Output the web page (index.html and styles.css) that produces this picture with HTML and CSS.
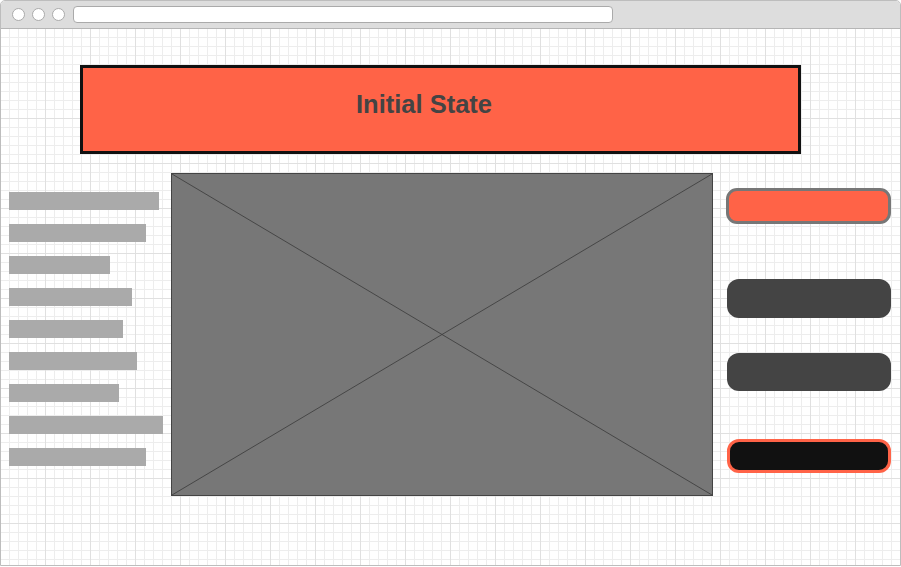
FILE: index.html
```html
<!DOCTYPE html>
<html lang="en">
<head>
<meta charset="utf-8">
<title>Initial State</title>
<link rel="stylesheet" href="styles.css">
</head>
<body>
<div class="window">
  <div class="chrome">
    <span class="dot"></span><span class="dot"></span><span class="dot"></span>
    <div class="address"></div>
  </div>
  <div class="canvas">
    <div class="header"><span class="title">Initial State</span></div>
    <div class="row">
      <div class="nav">
        <div class="bar" style="width:150px"></div>
        <div class="bar" style="width:137px"></div>
        <div class="bar" style="width:101px"></div>
        <div class="bar" style="width:123px"></div>
        <div class="bar" style="width:114px"></div>
        <div class="bar" style="width:128px"></div>
        <div class="bar" style="width:110px"></div>
        <div class="bar" style="width:154px"></div>
        <div class="bar" style="width:137px"></div>
      </div>
      <div class="image">
        <svg class="cross" viewBox="0 0 540 321" preserveAspectRatio="none" width="540" height="321">
          <line x1="0" y1="0" x2="540" y2="321" />
          <line x1="540" y1="0" x2="0" y2="321" />
        </svg>
      </div>
      <div class="actions">
        <div class="btn btn-primary"></div>
        <div class="btn btn-dark btn-2"></div>
        <div class="btn btn-dark btn-3"></div>
        <div class="btn btn-black"></div>
      </div>
    </div>
  </div>
</div>
</body>
</html>
```
FILE: styles.css
```css
html, body {
  margin: 0;
  padding: 0;
  background: #ffffff;
}

.window {
  width: 901px;
  height: 566px;
  box-sizing: border-box;
  border: 1px solid #bdbdbd;
  border-radius: 5px 5px 0 0;
  overflow: hidden;
  display: flex;
  flex-direction: column;
}

.chrome {
  height: 27px;
  flex: none;
  background: #dddddd;
  border-bottom: 1px solid #b5b5b5;
  display: flex;
  align-items: center;
  padding-left: 11px;
  gap: 7px;
}

.dot {
  width: 13px;
  height: 13px;
  box-sizing: border-box;
  border-radius: 50%;
  background: #ffffff;
  border: 1px solid #aaaaaa;
  flex: none;
}

.address {
  margin-left: 1px;
  width: 540px;
  height: 17px;
  box-sizing: border-box;
  background: #ffffff;
  border: 1px solid #aaaaaa;
  border-radius: 4px;
}

.canvas {
  flex: 1;
  background-color: #ffffff;
  background-image:
    linear-gradient(to right, transparent 44px, #e0e0e0 44px),
    linear-gradient(to bottom, transparent 44px, #e0e0e0 44px),
    linear-gradient(to right, transparent 8px, #ededed 8px),
    linear-gradient(to bottom, transparent 8px, #ededed 8px);
  background-size: 45px 45px, 45px 45px, 9px 9px, 9px 9px;
  padding-top: 36px;
}

.header {
  margin-left: 79px;
  width: 721px;
  height: 89px;
  box-sizing: border-box;
  border: 3px solid #111111;
  background: #ff6347;
  display: flex;
  align-items: center;
  justify-content: center;
  padding-bottom: 10px;
}

.title {
  font-family: "Liberation Sans", Arial, sans-serif;
  font-weight: bold;
  font-size: 25.5px;
  color: #444444;
  margin-right: 33px;
}

.row {
  display: flex;
  margin-top: 19px;
}

.nav {
  width: 170px;
  flex: none;
  box-sizing: border-box;
  padding: 19px 0 0 8px;
  display: flex;
  flex-direction: column;
  gap: 14px;
}

.bar {
  height: 18px;
  background: #aaaaaa;
}

.image {
  width: 542px;
  height: 323px;
  box-sizing: border-box;
  border: 1px solid #444444;
  background: #777777;
  flex: none;
}

.cross {
  display: block;
}

.cross line {
  stroke: #3a3a3a;
  stroke-width: 0.8;
}

.actions {
  padding: 15px 0 0 13px;
  display: flex;
  flex-direction: column;
}

.btn {
  width: 165px;
  box-sizing: border-box;
  border-radius: 12px;
}

.btn-primary {
  height: 36px;
  background: #ff6347;
  border: 3px solid #777777;
  border-radius: 11px;
}

.btn-dark {
  background: #444444;
  width: 164px;
  margin-left: 1px;
}

.btn-2 {
  height: 39px;
  margin-top: 55px;
}

.btn-3 {
  height: 38px;
  margin-top: 35px;
}

.btn-black {
  height: 34px;
  margin-top: 48px;
  margin-left: 1px;
  width: 164px;
  background: #111111;
  border: 3px solid #ff6347;
  border-radius: 12px;
}
```
